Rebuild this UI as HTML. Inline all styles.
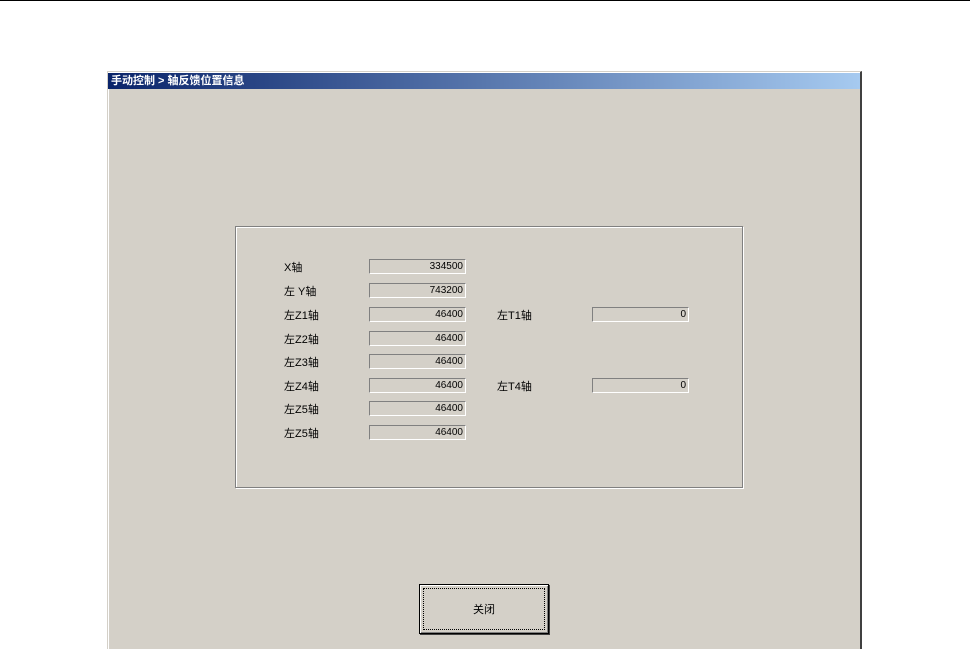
<!DOCTYPE html>
<html><head><meta charset="utf-8"><style>
body{margin:0;width:970px;height:648px;background:#fff;position:relative;overflow:hidden;font-family:"Liberation Sans","WenQuanYi Zen Hei","Noto Sans CJK SC",sans-serif;font-size:11px;color:#000}
.topline{position:absolute;left:0;top:0;width:970px;height:1px;background:#000}
.win{position:absolute;left:107px;top:71px;width:752px;height:577px;background:#d4d0c8;border-left:1px solid #d4d0c8;border-top:1px solid #d4d0c8;border-right:2px solid #404040;box-shadow:inset 1px 1px 0 #fff}
.title{position:absolute;left:108px;top:73px;width:752px;height:16px;background:linear-gradient(to right,#0a246a,#a6caf0);color:#fff;font-weight:bold;font-size:11px;line-height:16px;padding-left:3px;box-sizing:border-box}
.grp{position:absolute;left:235px;top:226px;width:506px;height:260px;border:1px solid #808080;box-shadow:1px 1px 0 #fff,inset 1px 1px 0 #fff}
.lbl{position:absolute;font-size:11px;line-height:14px}
.fld{position:absolute;width:93px;height:13px;border:1px solid;border-color:#808080 #fff #fff #808080;text-align:right;font-size:10px;line-height:14px;padding-right:2px;box-sizing:content-box}
.btn{position:absolute;left:419px;top:584px;width:128px;height:48px;background:#d4d0c8;border:1px solid #000;box-shadow:inset 1px 1px 0 #fff,inset -1px -1px 0 #808080,1px 1px 0 #404040}
.btn .f{position:absolute;left:3px;top:3px;right:3px;bottom:3px;border:1px dotted #000;text-align:center;line-height:42px;font-size:11px}
</style></head><body>
<div class="topline"></div>
<div class="win"></div>
<div class="title">手动控制 &gt; 轴反馈位置信息</div>
<div class="grp"></div>
<div class="lbl" style="left:284px;top:261px">X轴</div><div class="fld" style="left:369px;top:259px">334500</div>
<div class="lbl" style="left:284px;top:285px">左 Y轴</div><div class="fld" style="left:369px;top:283px">743200</div>
<div class="lbl" style="left:284px;top:309px">左Z1轴</div><div class="fld" style="left:369px;top:307px">46400</div>
<div class="lbl" style="left:284px;top:333px">左Z2轴</div><div class="fld" style="left:369px;top:331px">46400</div>
<div class="lbl" style="left:284px;top:356px">左Z3轴</div><div class="fld" style="left:369px;top:354px">46400</div>
<div class="lbl" style="left:284px;top:380px">左Z4轴</div><div class="fld" style="left:369px;top:378px">46400</div>
<div class="lbl" style="left:284px;top:403px">左Z5轴</div><div class="fld" style="left:369px;top:401px">46400</div>
<div class="lbl" style="left:284px;top:427px">左Z5轴</div><div class="fld" style="left:369px;top:425px">46400</div>
<div class="lbl" style="left:497px;top:309px">左T1轴</div><div class="fld" style="left:592px;top:307px">0</div>
<div class="lbl" style="left:497px;top:380px">左T4轴</div><div class="fld" style="left:592px;top:378px">0</div>
<div class="btn"><div class="f">关闭</div></div>
</body></html>
